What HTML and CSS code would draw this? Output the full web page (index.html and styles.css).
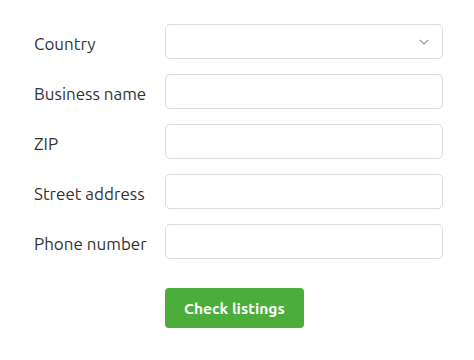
FILE: index.html
```html
<!DOCTYPE html>
<html lang="en">
<head>
    <meta charset="UTF-8">
    <meta name="viewport" content="width=device-width, initial-scale=1.0">
    <title>Check listings</title>
    <link rel="stylesheet" href="styles.css">
</head>
<body>
    <form class="listing-form">
        <label class="field-label" for="country">Country</label>
        <div class="select-wrap">
            <select id="country" name="country" class="field-input">
                <option value=""></option>
            </select>
            <svg class="chevron" width="10" height="6" viewBox="0 0 10 6">
                <path d="M1 1l4 4 4-4" fill="none" stroke="#999" stroke-width="1.2"/>
            </svg>
        </div>

        <label class="field-label" for="business_name">Business name</label>
        <input class="field-input" type="text" id="business_name" name="business_name">

        <label class="field-label" for="zip">ZIP</label>
        <input class="field-input" type="text" id="zip" name="zip">

        <label class="field-label" for="street">Street address</label>
        <input class="field-input" type="text" id="street" name="street">

        <label class="field-label" for="phone">Phone number</label>
        <input class="field-input" type="text" id="phone" name="phone">

        <div></div>
        <div class="button-row">
            <button type="button" class="check-button">Check listings</button>
        </div>
    </form>
</body>
</html>
```

FILE: styles.css
```css
body {
    margin: 0;
    background: #fff;
    font-family: 'Ubuntu', 'Open Sans', sans-serif;
    color: #333;
}
.listing-form {
    display: grid;
    grid-template-columns: 131px 278px;
    row-gap: 15px;
    align-items: center;
    padding: 24px 0 0 34px;
}
.field-label {
    font-size: 17px;
    padding-top: 3px;
}
.field-input {
    box-sizing: border-box;
    width: 100%;
    height: 35px;
    border: 1px solid #dcdcdc;
    border-radius: 5px;
    background: #fff;
    outline: none;
    font-family: inherit;
    font-size: 15px;
    padding: 0 10px;
}
.select-wrap {
    position: relative;
}
.select-wrap select {
    appearance: none;
    -webkit-appearance: none;
    display: block;
}
.chevron {
    position: absolute;
    right: 14px;
    top: 15px;
}
.button-row {
    padding-top: 14px;
}
.check-button {
    height: 40px;
    padding: 0 19px;
    background: #4cae3a;
    color: #fff;
    border: none;
    border-radius: 4px;
    font-family: inherit;
    font-size: 15.5px;
    font-weight: bold;
    cursor: pointer;
}
```
